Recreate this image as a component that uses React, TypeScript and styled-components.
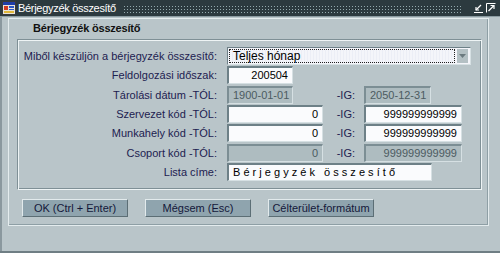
import styled, { createGlobalStyle } from 'styled-components';

const GlobalStyle = createGlobalStyle`
  html, body {
    margin: 0;
    padding: 0;
    background: #b9c5c9;
  }
  * {
    box-sizing: border-box;
  }
`;

const Window = styled.div`
  width: 500px;
  height: 253px;
  display: flex;
  flex-direction: column;
  background: #b9c5c9;
  font-family: 'Liberation Sans', Arial, sans-serif;
  font-size: 11px;
  border-bottom: 2px solid #6f7e84;
  overflow: hidden;
`;

const TitleBar = styled.div`
  height: 17px;
  display: flex;
  align-items: center;
  background: #2c3a3f;
  color: #ffffff;
  padding: 0 4px 0 2px;
  border-bottom: 1px solid #8c9ca2;
`;

const TitleIcon = styled.svg`
  flex: none;
  margin-right: 2px;
`;

const TitleText = styled.span`
  flex: none;
  font-size: 11px;
  letter-spacing: -0.3px;
  white-space: nowrap;
  padding-right: 6px;
`;

const Dots = styled.div`
  flex: 1 1 auto;
  align-self: center;
  height: 9px;
  margin-right: 8px;
  background-color: #95abaf;
  background-image: linear-gradient(90deg, #2c3a3f 2px, transparent 2px),
    linear-gradient(#2c3a3f 2px, transparent 2px);
  background-size: 3px 3px;
`;

const ControlIcon = styled.svg`
  flex: none;
  margin-left: 3px;
`;

const Body = styled.div`
  flex: 1;
  display: flex;
  flex-direction: column;
  padding: 1px 11px 25px 6px;
  border-left: 2px solid #8a989e;
`;

const Frame = styled.div`
  flex: 1;
  display: flex;
  flex-direction: column;
  border: 1px solid #e4ecee;
  box-shadow: inset -1px -1px 0 #8e9fa5;
`;

const Header = styled.div`
  height: 20px;
  line-height: 19px;
  padding-left: 24px;
  font-weight: bold;
  color: #111111;
  letter-spacing: -0.2px;
`;

const Panel = styled.div`
  height: 151px;
  margin: 0 6px 0 8px;
  padding-top: 7px;
  border-top: 1px solid #7f9096;
  border-left: 1px solid #7f9096;
  border-right: 1px solid #eef4f5;
  border-bottom: 1px solid #eef4f5;
  box-shadow: inset 1px 1px 0 #eef4f5, inset -1px -1px 0 #7f9096;
`;

const Form = styled.div`
  display: grid;
  grid-template-columns: 209px 95px 42px 98px;
  grid-auto-rows: 18px;
  row-gap: 1.35px;
`;

const Label = styled.div`
  text-align: right;
  padding-right: 10px;
  color: #1d2150;
  line-height: 18px;
  white-space: nowrap;
`;

const IgLabel = styled(Label)`
  padding-right: 9px;
`;

const Field = styled.div<{ $width: number; $align?: 'left' | 'right'; $disabled?: boolean; $span?: boolean }>`
  width: ${({ $width }) => $width}px;
  height: 18px;
  line-height: 15px;
  padding: 0 4px;
  grid-column: ${({ $span }) => ($span ? '2 / -1' : 'auto')};
  text-align: ${({ $align }) => $align ?? 'right'};
  background: ${({ $disabled }) => ($disabled ? '#aebcc0' : '#fafbfd')};
  color: ${({ $disabled }) => ($disabled ? '#4c5b61' : '#000000')};
  border-top: 2px solid ${({ $disabled }) => ($disabled ? '#7c8e94' : '#6d8087')};
  border-left: 2px solid ${({ $disabled }) => ($disabled ? '#7c8e94' : '#6d8087')};
  border-right: 1px solid #d6e0e3;
  border-bottom: 1px solid #d6e0e3;
  white-space: pre;
  overflow: hidden;
`;

const Combo = styled.div`
  grid-column: 2 / -1;
  width: 244px;
  height: 18px;
  display: flex;
  align-items: stretch;
  padding: 1px 2px 1px 1px;
  background: #f4f5fa;
  border-top: 1px solid #6d8087;
  border-left: 1px solid #6d8087;
  border-right: 1px solid #d6e0e3;
  border-bottom: 1px solid #d6e0e3;
`;

const ComboText = styled.div`
  flex: 1;
  line-height: 13px;
  padding-left: 3px;
  color: #000000;
  font-size: 12px;
  border: 1px dotted #202020;
  background: repeating-linear-gradient(90deg, #f4f5fa 0 2px, #eceef6 2px 3px);
`;

const ComboButton = styled.div`
  width: 11px;
  margin-left: 2px;
  display: flex;
  align-items: center;
  justify-content: center;
  background: #b4c0c4;
`;

const ButtonRow = styled.div`
  display: flex;
  gap: 17px;
  padding-left: 13px;
  margin-top: 9px;
`;

const Button = styled.button`
  width: 106px;
  height: 18px;
  padding: 0;
  font-family: 'Liberation Sans', Arial, sans-serif;
  font-size: 11px;
  white-space: nowrap;
  color: #14183a;
  background: #8fa4ae;
  border-top: 1px solid #e2eaec;
  border-left: 1px solid #e2eaec;
  border-right: 1px solid #5c6e75;
  border-bottom: 1px solid #5c6e75;
  text-align: center;
`;

const spaced = 'B é r j e g y z é k   ö s s z e s í t ő';

export default function App() {
  return (
    <Window>
      <GlobalStyle />
      <TitleBar>
        <TitleIcon width="14" height="14" viewBox="0 0 14 14">
          <rect x="0.5" y="0.5" width="13" height="13" fill="#e8e4dc" stroke="#3a3a3a" />
          <rect x="1" y="1" width="12" height="3" fill="#1e3ea8" />
          <rect x="2" y="5" width="4" height="4" fill="#d23a22" />
          <rect x="7" y="5" width="5" height="2" fill="#2c58c8" />
          <rect x="7" y="8" width="5" height="1" fill="#2c58c8" />
          <rect x="2" y="10" width="10" height="2" fill="#e0b83a" />
        </TitleIcon>
        <TitleText>Bérjegyzék összesítő</TitleText>
        <Dots />
        <ControlIcon width="9" height="9" viewBox="0 0 9 9">
          <path d="M7 1 L2 6" stroke="#ffffff" strokeWidth="1.2" fill="none" />
          <path d="M2 3 V6 H5" stroke="#ffffff" strokeWidth="1.2" fill="none" />
          <path d="M0 8.5 H9" stroke="#ffffff" strokeWidth="1" />
        </ControlIcon>
        <ControlIcon width="10" height="10" viewBox="0 0 10 10">
          <path d="M0.5 9.5 V0.5 H9.5" stroke="#ffffff" strokeWidth="1" fill="none" />
          <path d="M2.5 8 L8 2.5" stroke="#ffffff" strokeWidth="1.2" fill="none" />
          <path d="M4.5 2.5 H8 V6" stroke="#ffffff" strokeWidth="1.2" fill="none" />
        </ControlIcon>
      </TitleBar>
      <Body>
        <Frame>
          <Header>Bérjegyzék összesítő</Header>
          <Panel>
            <Form>
              <Label>Miből készüljön a bérjegyzék összesítő:</Label>
              <Combo>
                <ComboText>Teljes hónap</ComboText>
                <ComboButton>
                  <svg width="7" height="4" viewBox="0 0 7 4">
                    <path d="M0 0 H7 L3.5 4 Z" fill="#6c7a80" />
                  </svg>
                </ComboButton>
              </Combo>

              <Label>Feldolgozási időszak:</Label>
              <Field $width={66} $span>200504</Field>

              <Label>Tárolási dátum -TÓL:</Label>
              <Field $width={66} $align="left" $disabled>1900-01-01</Field>
              <IgLabel>-IG:</IgLabel>
              <Field $width={67} $align="left" $disabled>2050-12-31</Field>

              <Label>Szervezet kód -TÓL:</Label>
              <Field $width={96}>0</Field>
              <IgLabel>-IG:</IgLabel>
              <Field $width={98}>999999999999</Field>

              <Label>Munkahely kód -TÓL:</Label>
              <Field $width={96}>0</Field>
              <IgLabel>-IG:</IgLabel>
              <Field $width={98}>999999999999</Field>

              <Label>Csoport kód -TÓL:</Label>
              <Field $width={96} $disabled>0</Field>
              <IgLabel>-IG:</IgLabel>
              <Field $width={98} $disabled>999999999999</Field>

              <Label>Lista címe:</Label>
              <Field $width={205} $align="left" $span>{spaced}</Field>
            </Form>
          </Panel>
          <ButtonRow>
            <Button>OK (Ctrl + Enter)</Button>
            <Button>Mégsem (Esc)</Button>
            <Button>Célterület-formátum</Button>
          </ButtonRow>
        </Frame>
      </Body>
    </Window>
  );
}
